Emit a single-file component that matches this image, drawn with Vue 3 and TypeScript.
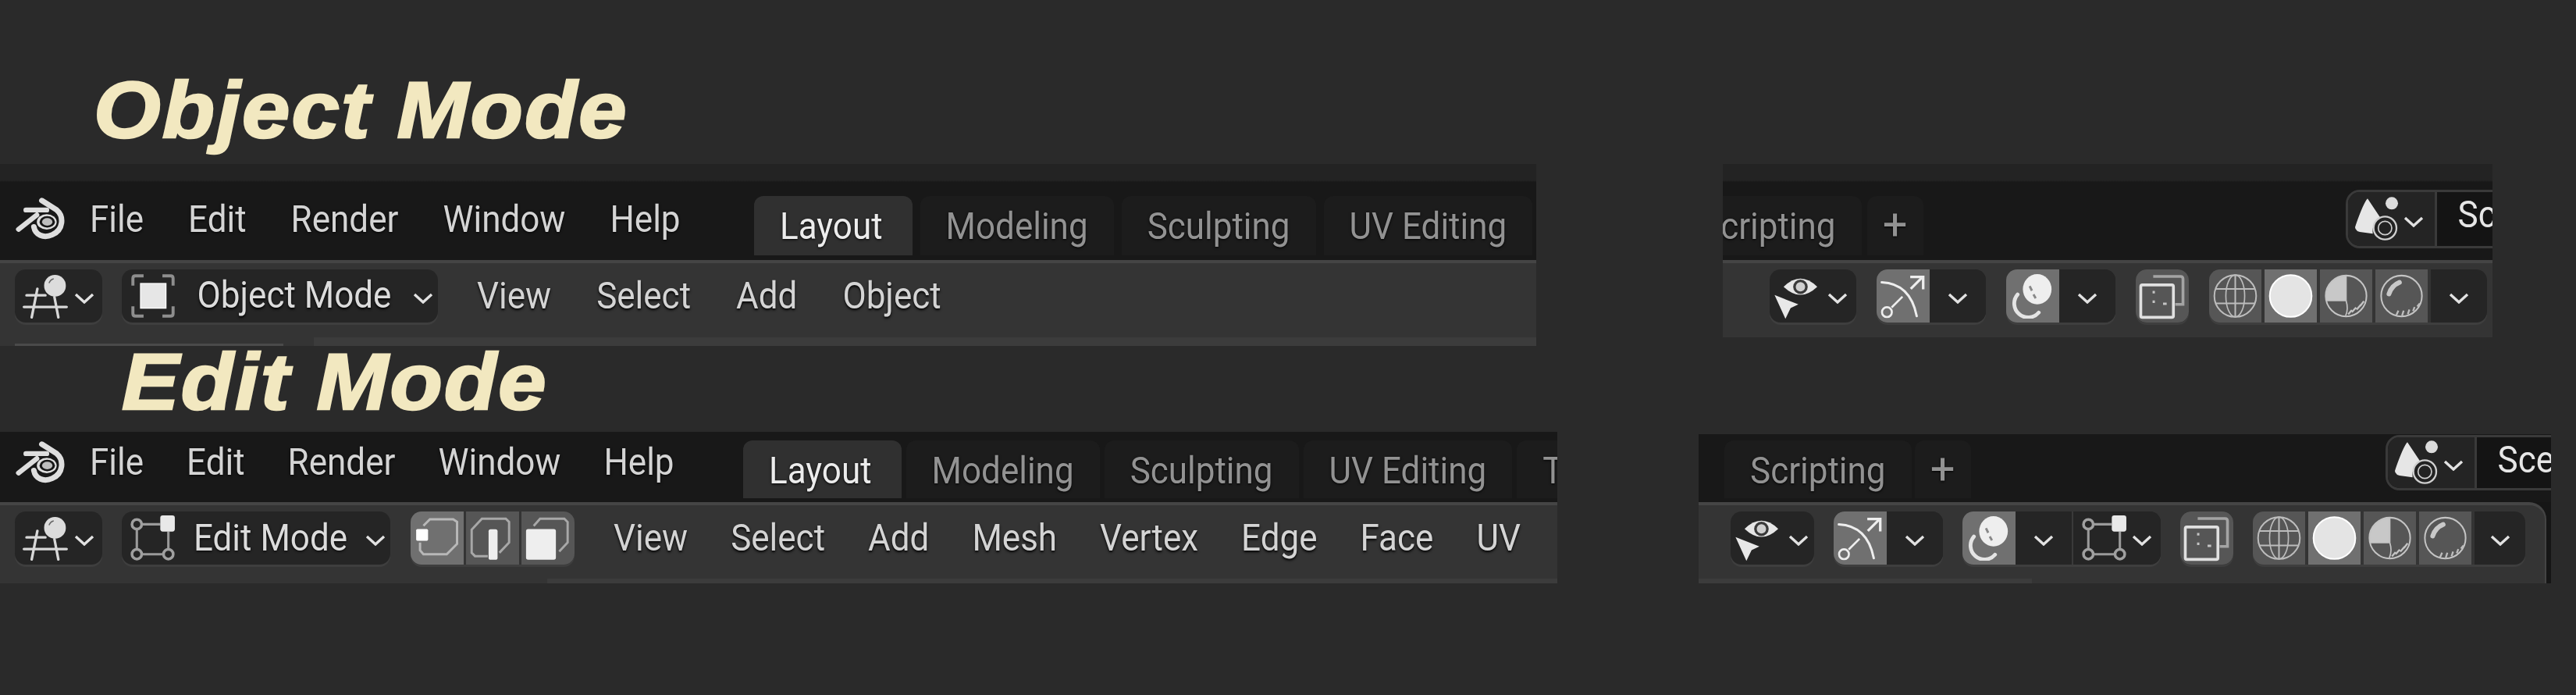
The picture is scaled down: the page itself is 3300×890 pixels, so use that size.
<template>
  <div class="page">
    <svg class="defs" aria-hidden="true">
      <symbol id="logo" viewBox="0 0 200 170">
        <path d="M108 12 L168 50 C198 76 196 130 150 150 C114 166 82 150 76 118" fill="none" stroke="#dedede" stroke-width="22" stroke-linecap="round" />
        <path d="M44 50 H128 M14 128 L88 70" fill="none" stroke="#dedede" stroke-width="20" stroke-linecap="round" />
        <ellipse cx="128" cy="98" rx="40" ry="31" fill="#dedede" />
        <ellipse cx="130" cy="98" rx="31" ry="23" fill="#161616" />
        <ellipse cx="130" cy="98" rx="21" ry="15" fill="#bdbdbd" />
      </symbol>
      <symbol id="viewport" viewBox="90 360 175 175">
        <circle cx="215" cy="408" r="42" fill="#dcdcdc" />
        <path d="M192 398 Q197 384 210 381" fill="none" stroke="#666" stroke-width="5" />
        <path d="M105 445 H178 M95 490 H260 M147 420 L125 530 M213 452 L228 530" fill="none" stroke="#d8d8d8" stroke-width="10" stroke-linecap="round" />
      </symbol>
      <symbol id="chevron" viewBox="0 0 26 14">
        <path d="M2 2 L13 12 L24 2" fill="none" stroke="#e2e2e2" stroke-width="3.4" />
      </symbol>
      <symbol id="mode-object" viewBox="495 360 178 178">
        <rect x="535" y="400" width="100" height="97" fill="#e6e6e6" stroke="#fff" stroke-width="4" />
        <path d="M505 408 V380 Q505 370 515 370 H547 M663 408 V380 Q663 370 653 370 H621 M505 490 V518 Q505 528 515 528 H547 M663 490 V518 Q663 528 653 528 H621" fill="none" stroke="#8e8e8e" stroke-width="12" />
      </symbol>
      <symbol id="mode-edit" viewBox="0 0 56 56">
        <path d="M14 11 H37 M8 17 V42 M14 48 H41 M47 42 V20" fill="none" stroke="#9a9a9a" stroke-width="3" />
        <circle cx="8" cy="11" r="6" fill="none" stroke="#a0a0a0" stroke-width="3.4" />
        <circle cx="8" cy="48" r="6" fill="none" stroke="#a0a0a0" stroke-width="3.4" />
        <circle cx="47" cy="48" r="6" fill="none" stroke="#a0a0a0" stroke-width="3.4" />
        <rect x="37" y="0" width="18" height="20" rx="3" fill="#e8e8e8" />
      </symbol>
      <symbol id="sel-vertex" viewBox="78 45 200 205">
        <path d="M125 100 L150 75 H240 L255 85 V170 L215 210 H125 L112 195 V165" fill="none" stroke="#b8b8b8" stroke-width="9" />
        <rect x="97" y="113" width="46" height="45" rx="5" fill="#fff" />
      </symbol>
      <symbol id="sel-edge" viewBox="290 45 207 205">
        <path d="M375 218 H325 L312 205 V115 L352 72 H445 L458 85 V165 L420 205" fill="none" stroke="#a8a8a8" stroke-width="9" />
        <rect x="378" y="113" width="35" height="119" rx="8" fill="#eee" />
      </symbol>
      <symbol id="sel-face" viewBox="507 45 208 205">
        <path d="M555 100 L580 72 H675 L688 85 V165 L655 200" fill="none" stroke="#a8a8a8" stroke-width="9" />
        <rect x="525" y="112" width="117" height="120" rx="8" fill="#eee" />
      </symbol>
      <symbol id="visibility" viewBox="30 50 190 190">
        <path d="M75 108 Q140 45 205 108 Q140 170 75 108 Z" fill="#e6e6e6" />
        <circle cx="140" cy="108" r="28" fill="#3a3a3a" />
        <circle cx="140" cy="108" r="18" fill="#cfcfcf" />
        <path d="M40 140 L132 176 L102 190 L82 232 Z" fill="#e8e8e8" />
      </symbol>
      <symbol id="gizmo" viewBox="430 45 205 205">
        <path d="M450 95 Q560 100 585 225" fill="none" stroke="#eee" stroke-width="9" stroke-linecap="round" />
        <path d="M562 120 L608 74 M560 74 H610 V122" fill="none" stroke="#eee" stroke-width="10" />
        <circle cx="470" cy="210" r="19" fill="none" stroke="#eee" stroke-width="8" />
        <path d="M488 192 L530 150" fill="none" stroke="#eee" stroke-width="8" />
      </symbol>
      <symbol id="overlay" viewBox="0 0 60 60">
        <path d="M10 28 A18 18 0 1 0 38 52" fill="none" stroke="#e4e4e4" stroke-width="5" stroke-linecap="round" />
        <ellipse cx="36" cy="21" rx="19" ry="20" fill="#eee" />
        <path d="M26 17 L29 23 M31 28 L34 33" fill="none" stroke="#888" stroke-width="3" />
      </symbol>
      <symbol id="xray" viewBox="55 345 200 205">
        <path d="M120 372 H225 Q235 372 235 382 V480 H205" fill="none" stroke="#a4a4a4" stroke-width="11" />
        <rect x="72" y="405" width="126" height="125" rx="6" fill="none" stroke="#e0e0e0" stroke-width="11" />
        <path d="M122 428 V438 M122 465 V475 M158 478 H172" fill="none" stroke="#c4c4c4" stroke-width="9" />
      </symbol>
      <symbol id="sh-wire" viewBox="-100 -100 200 200">
        <circle r="80" fill="none" stroke="#bcbcbc" stroke-width="6" />
        <path d="M-76 -27 H76 M-76 28 H76 M0 -80 V80" fill="none" stroke="#bcbcbc" stroke-width="6" />
        <ellipse rx="36" ry="80" fill="none" stroke="#bcbcbc" stroke-width="5" />
      </symbol>
      <symbol id="sh-solid" viewBox="-100 -100 200 200">
        <circle r="80" fill="#e4e4e4" stroke="#fff" stroke-width="6" />
      </symbol>
      <symbol id="sh-mat" viewBox="-100 -100 200 200">
        <path d="M0 18 V-78 A78 78 0 0 0 -76 18 Z" fill="#c8c8c8" />
        <circle r="78" fill="none" stroke="#c4c4c4" stroke-width="6" />
        <path d="M0 -78 V18 H-76 M0 18 Q10 50 -2 76" fill="none" stroke="#c4c4c4" stroke-width="5" />
        <path d="M22 62 L38 44 M40 52 L56 34 M54 38 L68 20 M8 70 L22 54" fill="none" stroke="#c4c4c4" stroke-width="7" />
      </symbol>
      <symbol id="sh-render" viewBox="-100 -100 200 200">
        <circle r="78" fill="none" stroke="#c4c4c4" stroke-width="6" />
        <path d="M-48 -8 Q-38 -40 -8 -52" fill="none" stroke="#c8c8c8" stroke-width="18" stroke-linecap="round" />
        <path d="M-20 74 L-12 56 M2 76 L8 56 M24 70 L30 52 M44 58 L50 42 M60 40 L70 28" fill="none" stroke="#bdbdbd" stroke-width="7" />
      </symbol>
      <symbol id="scene" viewBox="885 65 180 180">
        <path d="M945 75 Q930 90 900 175 Q890 195 915 203 L965 210 Q960 170 995 150 Z" fill="#e6e6e6" />
        <circle cx="1038" cy="93" r="24" fill="#dcdcdc" />
        <circle cx="1012" cy="188" r="44" fill="#222" stroke="#cfcfcf" stroke-width="7" />
        <circle cx="1012" cy="188" r="26" fill="none" stroke="#cfcfcf" stroke-width="5" />
      </symbol>
    </svg>

    <section class="block obj">
      <div class="title-wrap"><h1 class="title">Object Mode</h1></div>
      <div class="strips">
        <div class="strip">
          <div class="topbar">
            <div class="top-left">
              <svg class="logo"><use href="#logo" /></svg>
              <nav class="menu">
                <span v-for="m in mainMenu" :key="m">{{ m }}</span>
              </nav>
            </div>
            <div class="tabs">
              <span v-for="(t, i) in objTabs" :key="t" class="tab" :class="{ active: i === 0 }"><span>{{ t }}</span></span>
            </div>
          </div>
          <div class="header">
            <div class="header-row">
              <div class="widget picker">
                <svg class="ico58"><use href="#viewport" /></svg>
                <svg class="chev"><use href="#chevron" /></svg>
              </div>
              <div class="widget mode">
                <svg class="ico58"><use href="#mode-object" /></svg>
                <span class="mode-label">Object Mode</span>
                <svg class="chev"><use href="#chevron" /></svg>
              </div>
              <nav class="menu header-menu">
                <span v-for="m in objMenu" :key="m">{{ m }}</span>
              </nav>
            </div>
            <div class="band-row">
              <div class="ticks" />
              <div class="band" />
            </div>
          </div>
        </div>

        <div class="strip right">
          <div class="topbar">
            <div class="tabs clipped">
              <span class="tab"><span>Scripting</span></span>
              <span class="tab plus">+</span>
            </div>
            <div class="scene-group">
              <div class="scene-icon">
                <svg class="ico60"><use href="#scene" /></svg>
                <svg class="chev"><use href="#chevron" /></svg>
              </div>
              <div class="scene-name"><span>Scene</span></div>
            </div>
          </div>
          <div class="header">
            <div class="header-row tools">
              <div class="widget vis">
                <svg class="ico63"><use href="#visibility" /></svg>
                <svg class="chev"><use href="#chevron" /></svg>
              </div>
              <div class="widget">
                <span class="seg on"><svg class="fill"><use href="#gizmo" /></svg></span>
                <span class="drop"><svg class="chev"><use href="#chevron" /></svg></span>
              </div>
              <div class="widget">
                <span class="seg on"><svg class="ico58"><use href="#overlay" /></svg></span>
                <span class="drop"><svg class="chev"><use href="#chevron" /></svg></span>
              </div>
              <div class="widget">
                <span class="seg"><svg class="fill"><use href="#xray" /></svg></span>
              </div>
              <div class="widget spaced">
                <span v-for="(s, i) in shading" :key="s" class="seg" :class="{ on: i === 1 }">
                  <svg class="fill"><use :href="'#' + s" /></svg>
                </span>
                <span class="drop"><svg class="chev"><use href="#chevron" /></svg></span>
              </div>
            </div>
          </div>
        </div>
      </div>
    </section>

    <section class="block edit">
      <div class="title-wrap"><h1 class="title">Edit Mode</h1></div>
      <div class="strips">
        <div class="strip">
          <div class="topbar">
            <div class="top-left">
              <svg class="logo"><use href="#logo" /></svg>
              <nav class="menu">
                <span v-for="m in mainMenu" :key="m">{{ m }}</span>
              </nav>
            </div>
            <div class="tabs">
              <span v-for="(t, i) in editTabs" :key="t" class="tab" :class="{ active: i === 0 }"><span>{{ t }}</span></span>
            </div>
          </div>
          <div class="header">
            <div class="header-row">
              <div class="widget picker">
                <svg class="ico58"><use href="#viewport" /></svg>
                <svg class="chev"><use href="#chevron" /></svg>
              </div>
              <div class="widget mode">
                <svg class="ico58"><use href="#mode-edit" /></svg>
                <span class="mode-label">Edit Mode</span>
                <svg class="chev"><use href="#chevron" /></svg>
              </div>
              <div class="widget select-modes">
                <span class="seg on"><svg class="fill"><use href="#sel-vertex" /></svg></span>
                <span class="seg"><svg class="fill"><use href="#sel-edge" /></svg></span>
                <span class="seg"><svg class="fill"><use href="#sel-face" /></svg></span>
              </div>
              <nav class="menu header-menu">
                <span v-for="m in editMenu" :key="m">{{ m }}</span>
              </nav>
            </div>
            <div class="band" />
          </div>
        </div>

        <div class="strip right">
          <div class="topbar">
            <div class="tabs">
              <span class="tab"><span>Scripting</span></span>
              <span class="tab plus">+</span>
            </div>
            <div class="scene-group">
              <div class="scene-icon">
                <svg class="ico60"><use href="#scene" /></svg>
                <svg class="chev"><use href="#chevron" /></svg>
              </div>
              <div class="scene-name"><span>Scene</span></div>
            </div>
          </div>
          <div class="header">
            <div class="header-row tools">
              <div class="widget vis">
                <svg class="ico63"><use href="#visibility" /></svg>
                <svg class="chev"><use href="#chevron" /></svg>
              </div>
              <div class="widget">
                <span class="seg on"><svg class="fill"><use href="#gizmo" /></svg></span>
                <span class="drop"><svg class="chev"><use href="#chevron" /></svg></span>
              </div>
              <div class="widget">
                <span class="seg on"><svg class="ico58"><use href="#overlay" /></svg></span>
                <span class="drop"><svg class="chev"><use href="#chevron" /></svg></span>
                <span class="drop wide">
                  <svg class="ico58"><use href="#mode-edit" /></svg>
                  <svg class="chev"><use href="#chevron" /></svg>
                </span>
              </div>
              <div class="widget">
                <span class="seg"><svg class="fill"><use href="#xray" /></svg></span>
              </div>
              <div class="widget spaced">
                <span v-for="(s, i) in shading" :key="s" class="seg" :class="{ on: i === 1 }">
                  <svg class="fill"><use :href="'#' + s" /></svg>
                </span>
                <span class="drop"><svg class="chev"><use href="#chevron" /></svg></span>
              </div>
            </div>
            <div class="band" />
          </div>
        </div>
      </div>
    </section>
  </div>
</template>

<script setup lang="ts">
const mainMenu: string[] = ['File', 'Edit', 'Render', 'Window', 'Help']
const objTabs: string[] = ['Layout', 'Modeling', 'Sculpting', 'UV Editing']
const editTabs: string[] = ['Layout', 'Modeling', 'Sculpting', 'UV Editing', 'Texture Paint']
const objMenu: string[] = ['View', 'Select', 'Add', 'Object']
const editMenu: string[] = ['View', 'Select', 'Add', 'Mesh', 'Vertex', 'Edge', 'Face', 'UV']
const shading: string[] = ['sh-wire', 'sh-solid', 'sh-mat', 'sh-render']
</script>

<style scoped>
.page {
  width: 3300px;
  height: 890px;
  overflow: hidden;
  background: #2a2a2a;
  font-family: Roboto, "Liberation Sans", sans-serif;
  font-size: 44px;
  color: #d6d6d6;
}
.defs {
  position: absolute;
  width: 0;
  height: 0;
}
.title-wrap {
  box-sizing: border-box;
}
.obj .title-wrap {
  height: 210px;
  padding: 101px 0 0 120px;
}
.edit .title-wrap {
  height: 110px;
  padding: 6px 0 0 156px;
}
.title {
  margin: 0;
  font-family: "Liberation Sans", Arial, sans-serif;
  font-size: 102px;
  font-style: italic;
  font-weight: 700;
  line-height: 80px;
  letter-spacing: 2px;
  color: #f2e8c0;
  -webkit-text-stroke: 2.5px #f2e8c0;
  white-space: nowrap;
  transform: scaleX(1.08);
  transform-origin: left center;
}
.strips {
  display: flex;
  align-items: flex-start;
}
.strip {
  display: flex;
  flex-direction: column;
  flex-shrink: 0;
  overflow: hidden;
  filter: blur(0.7px);
}
.obj .strip {
  width: 1968px;
}
.obj .strip.right {
  width: 986px;
  margin-left: 239px;
}
.edit .strip {
  width: 1995px;
}
.edit .strip.right {
  width: 1092px;
  margin: 3px 0 0 181px;
  background: #161616;
}

/* blender's labels come out a little taller than Roboto at this width */
.menu span,
.tab span,
.mode-label,
.scene-name span {
  display: inline-block;
  transform: scaleY(1.1);
  transform-origin: 50% 80%;
}

/* top bar */
.topbar {
  display: flex;
  align-items: flex-start;
  white-space: nowrap;
}
.obj .topbar {
  height: 123px;
  background: linear-gradient(#232323 0, #232323 21px, #181818 23px);
}
.edit .topbar {
  height: 90px;
  background: #181818;
}
.edit .right .topbar {
  height: 87px;
}
.top-left {
  display: flex;
  align-items: flex-start;
  flex-shrink: 0;
}
.obj .top-left {
  width: 966px;
  padding-top: 43px;
  box-sizing: border-box;
}
.edit .top-left {
  width: 952px;
  padding-top: 12px;
  box-sizing: border-box;
}
.logo {
  width: 66px;
  height: 54px;
  margin-left: 18px;
  margin-right: 31px;
  flex-shrink: 0;
}
.menu {
  display: flex;
  line-height: 50px;
  color: #d4d4d4;
  text-shadow: 0 1px 3px #000;
}
.obj .top-left .menu {
  gap: 57px;
  margin-top: 4px;
}
.edit .top-left .menu {
  gap: 55px;
  margin-top: 3px;
}
.tabs {
  display: flex;
  flex-shrink: 0;
}
.obj .tabs {
  gap: 10px;
  margin-top: 41px;
}
.edit .tabs {
  gap: 6px;
  margin-top: 11px;
}
.edit .right .tabs {
  margin: 8px 0 0 33px;
  gap: 4px;
}
.obj .tabs.clipped {
  margin-left: -62px;
  gap: 7px;
}
.tab {
  box-sizing: border-box;
  padding: 4px 33px 0;
  border-radius: 12px 12px 0 0;
  background: #1c1c1c;
  color: #929292;
  text-shadow: 0 1px 3px #000;
}
.obj .tab {
  height: 76px;
  line-height: 74px;
}
.edit .tab {
  height: 74px;
  line-height: 74px;
}
.tab.active {
  padding-right: 38px;
  background: #303030;
  color: #ececec;
}
.tab.plus {
  padding: 0 18px;
  width: 72px;
  text-align: center;
  font-size: 56px;
  font-weight: 400;
}
.scene-group {
  display: flex;
  flex-shrink: 0;
  width: 400px;
  border: 3px solid #3a3a3a;
  border-radius: 18px 0 0 18px;
  box-sizing: border-box;
  overflow: hidden;
}
.obj .scene-group {
  height: 75px;
  margin: 33px 0 0 541px;
}
.edit .scene-group {
  height: 71px;
  margin: 1px 0 0 531px;
}
.scene-icon {
  display: flex;
  align-items: center;
  gap: 6px;
  padding: 0 14px 0 5px;
  background: #242424;
  border-right: 3px solid #3a3a3a;
}
.scene-name {
  padding-left: 27px;
  background: #141414;
  flex: 1;
  line-height: 60px;
  color: #e6e6e6;
}

/* header */
.header {
  display: flex;
  flex-direction: column;
  background: #343434;
  border-top: 4px solid #454545;
}
.edit .right .header {
  margin-right: 6px;
  border-radius: 0 22px 0 0;
  border-right: 2px solid #444;
}
.header-row {
  display: flex;
  align-items: flex-start;
  padding-top: 8px;
  box-sizing: border-box;
  white-space: nowrap;
}
.obj .header-row {
  height: 95px;
}
.edit .header-row {
  height: 94px;
}
.obj .tools {
  gap: 26px;
  padding-left: 60px;
}
.edit .tools {
  gap: 25px;
  padding-left: 41px;
}
.band-row {
  display: flex;
  align-items: flex-end;
  height: 11px;
}
.ticks {
  width: 344px;
  height: 3px;
  margin-left: 19px;
  background: #4a4a4a;
}
.band {
  background: #3c3c3c;
}
.obj .band {
  flex: 1;
  height: 11px;
  margin-left: 39px;
}
.edit .band {
  height: 6px;
  margin-left: 701px;
}
.edit .right .band {
  width: 427px;
  margin-left: 0;
}
.widget {
  display: flex;
  align-items: stretch;
  flex-shrink: 0;
  height: 68px;
  border-radius: 14px;
  overflow: hidden;
  background: #252525;
  box-shadow: 0 3px 0 #3e3e3e;
}
.picker {
  align-items: center;
  box-sizing: border-box;
  width: 112px;
  margin-left: 19px;
  padding-left: 10px;
  gap: 8px;
}
.mode {
  align-items: center;
  justify-content: space-between;
  box-sizing: border-box;
  margin-left: 25px;
  padding: 0 6px 0 11px;
}
.obj .mode {
  width: 405px;
}
.edit .mode {
  width: 344px;
}
.mode-label {
  padding-top: 2px;
  line-height: 68px;
  color: #dcdcdc;
  text-shadow: 0 1px 3px #000;
}
.select-modes {
  margin-left: 26px;
  gap: 3px;
  background: transparent;
}
.header-menu {
  padding-top: 2px;
  line-height: 68px;
  margin-left: 50px;
}
.obj .header-menu {
  gap: 58px;
}
.edit .header-menu {
  gap: 55px;
}
.vis {
  align-items: center;
  box-sizing: border-box;
  padding-left: 3px;
  gap: 8px;
}
.obj .vis {
  width: 111px;
}
.edit .vis {
  width: 107px;
}
.seg {
  display: flex;
  align-items: center;
  justify-content: center;
  width: 68px;
  background: #565656;
}
.seg.on {
  background: #707070;
}
.spaced {
  gap: 4px;
  background: transparent;
}
.spaced .seg {
  width: 67px;
}
.drop {
  display: flex;
  align-items: center;
  justify-content: center;
  width: 72px;
  background: #252525;
}
.drop.wide {
  width: 114px;
  gap: 6px;
  border-left: 2px solid #3a3a3a;
  box-sizing: border-box;
}
.edit .spaced .drop {
  width: 65px;
}
.chev {
  width: 26px;
  height: 14px;
  flex-shrink: 0;
  margin-top: 6px;
}
.ico58 {
  width: 58px;
  height: 58px;
  flex-shrink: 0;
}
.ico60 {
  width: 60px;
  height: 60px;
  flex-shrink: 0;
}
.ico63 {
  width: 63px;
  height: 63px;
  flex-shrink: 0;
}
.fill {
  width: 100%;
  height: 100%;
}
</style>
<style>
html,
body {
  background: #2a2a2a;
}
</style>
